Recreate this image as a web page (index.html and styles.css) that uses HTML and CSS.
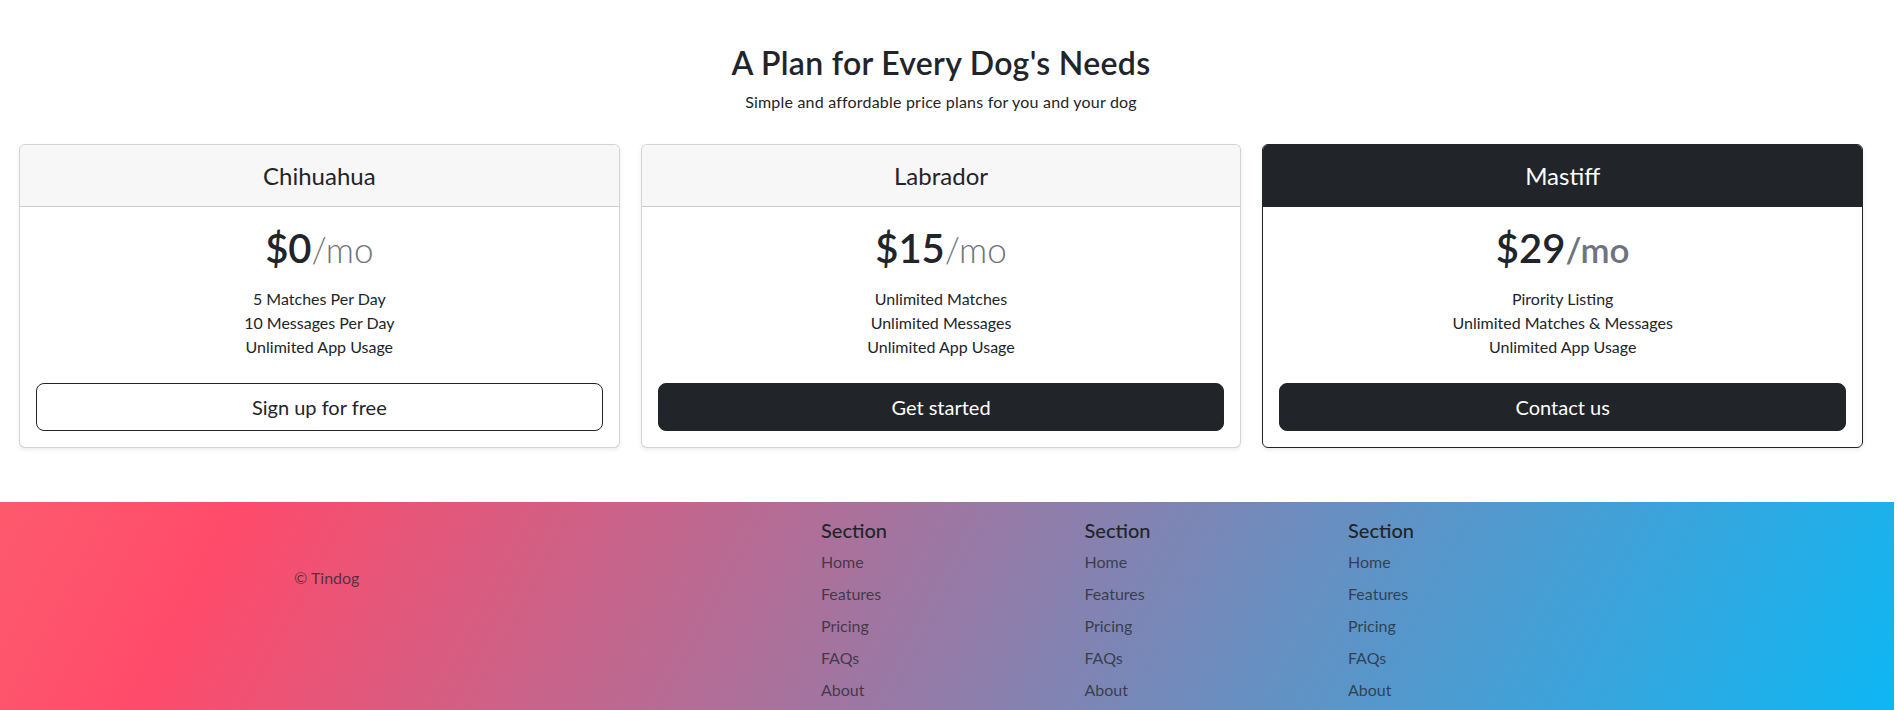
FILE: index.html
```html
<!DOCTYPE html>
<html lang="en">
<head>
<meta charset="utf-8">
<title>Tindog Pricing</title>
<link rel="stylesheet" href="styles.css">
</head>
<body>
<section class="pricing">
  <div class="pricing-header">
    <h2 class="pricing-title">A Plan for Every Dog's Needs</h2>
    <p class="pricing-lead">Simple and affordable price plans for you and your dog</p>
  </div>
  <div class="cards">
    <div class="card">
      <div class="card-header"><h4 class="plan-name">Chihuahua</h4></div>
      <div class="card-body">
        <h1 class="price">$0<small class="per per-light">/mo</small></h1>
        <ul class="features">
          <li>5 Matches Per Day</li>
          <li>10 Messages Per Day</li>
          <li>Unlimited App Usage</li>
        </ul>
        <button class="btn btn-outline" type="button">Sign up for free</button>
      </div>
    </div>
    <div class="card">
      <div class="card-header"><h4 class="plan-name">Labrador</h4></div>
      <div class="card-body">
        <h1 class="price">$15<small class="per per-light">/mo</small></h1>
        <ul class="features">
          <li>Unlimited Matches</li>
          <li>Unlimited Messages</li>
          <li>Unlimited App Usage</li>
        </ul>
        <button class="btn btn-dark" type="button">Get started</button>
      </div>
    </div>
    <div class="card card-dark">
      <div class="card-header"><h4 class="plan-name">Mastiff</h4></div>
      <div class="card-body">
        <h1 class="price">$29<small class="per">/mo</small></h1>
        <ul class="features">
          <li>Pirority Listing</li>
          <li>Unlimited Matches &amp; Messages</li>
          <li>Unlimited App Usage</li>
        </ul>
        <button class="btn btn-dark" type="button">Contact us</button>
      </div>
    </div>
  </div>
</section>
<footer class="footer">
  <div class="footer-col copyright">© Tindog</div>
  <div class="footer-col"></div>
  <div class="footer-col">
    <h5 class="footer-heading">Section</h5>
    <ul class="footer-links">
      <li><a href="#">Home</a></li>
      <li><a href="#">Features</a></li>
      <li><a href="#">Pricing</a></li>
      <li><a href="#">FAQs</a></li>
      <li><a href="#">About</a></li>
    </ul>
  </div>
  <div class="footer-col">
    <h5 class="footer-heading">Section</h5>
    <ul class="footer-links">
      <li><a href="#">Home</a></li>
      <li><a href="#">Features</a></li>
      <li><a href="#">Pricing</a></li>
      <li><a href="#">FAQs</a></li>
      <li><a href="#">About</a></li>
    </ul>
  </div>
  <div class="footer-col">
    <h5 class="footer-heading">Section</h5>
    <ul class="footer-links">
      <li><a href="#">Home</a></li>
      <li><a href="#">Features</a></li>
      <li><a href="#">Pricing</a></li>
      <li><a href="#">FAQs</a></li>
      <li><a href="#">About</a></li>
    </ul>
  </div>
</footer>
</body>
</html>
```
FILE: styles.css
```css
* {
  box-sizing: border-box;
}

html,
body {
  margin: 0;
  padding: 0;
}

body {
  font-family: Lato, "Open Sans", sans-serif;
  font-size: 16px;
  line-height: 1.5;
  color: #212529;
  background: #ffffff;
}

.pricing {
  width: 1883px;
  padding: 0 20px 0 19px;
}

.pricing-header {
  text-align: center;
  padding: 44px 0 30px;
}

.pricing-title {
  margin: 0 0 8px;
  font-size: 32px;
  font-weight: 600;
  line-height: 1.2;
  letter-spacing: 0.3px;
}

.pricing-lead {
  margin: 0;
  font-size: 16px;
  letter-spacing: 0.2px;
}

.cards {
  display: flex;
  gap: 21px;
}

.card {
  flex: 1 1 0;
  background: #ffffff;
  border: 1px solid rgba(0, 0, 0, 0.175);
  border-radius: 6px;
  box-shadow: 0 2px 4px rgba(0, 0, 0, 0.075);
  text-align: center;
  overflow: hidden;
}

.card-header {
  background: #f7f7f7;
  border-bottom: 1px solid rgba(0, 0, 0, 0.175);
  padding: 17px 16px 15px;
}

.plan-name {
  margin: 0;
  font-size: 24px;
  font-weight: 400;
  line-height: 1.2;
}

.card-dark {
  border-color: #212529;
}

.card-dark .card-header {
  background: #212529;
  border-bottom-color: #212529;
  color: #ffffff;
}

.card-body {
  padding: 17px 16px 16px;
}

.price {
  margin: 0;
  font-size: 40px;
  font-weight: 600;
  line-height: 1.2;
}

.per {
  font-size: 35px;
  color: #6c757d;
}

.per-light {
  font-weight: 300;
}

.features {
  list-style: none;
  margin: 15px 0 24px;
  padding: 0;
}

.btn {
  display: block;
  width: 100%;
  padding: 8px 16px;
  font-family: inherit;
  font-size: 20px;
  line-height: 1.5;
  border-radius: 8px;
  border: 1px solid #212529;
  cursor: pointer;
}

.btn-outline {
  background: transparent;
  color: #212529;
}

.btn-dark {
  background: #212529;
  color: #ffffff;
}

.footer {
  margin-top: 54px;
  margin-right: 3px;
  display: flex;
  padding: 16px 0 48px 282px;
  background: linear-gradient(118deg, #fd5a6d 0%, #ff4b6b 12%, #0ab9f6 100%);
}

.footer-col {
  width: 263.5px;
  padding: 0 12px;
}

.copyright {
  padding-top: 48px;
  color: rgba(33, 37, 41, 0.75);
}

.footer-heading {
  margin: 0 0 8px;
  font-size: 20px;
  font-weight: 500;
  line-height: 1.2;
}

.footer-links {
  list-style: none;
  margin: 0;
  padding: 0;
}

.footer-links li {
  margin-bottom: 8px;
}

.footer-links a {
  color: rgba(33, 37, 41, 0.75);
  text-decoration: none;
}
```
